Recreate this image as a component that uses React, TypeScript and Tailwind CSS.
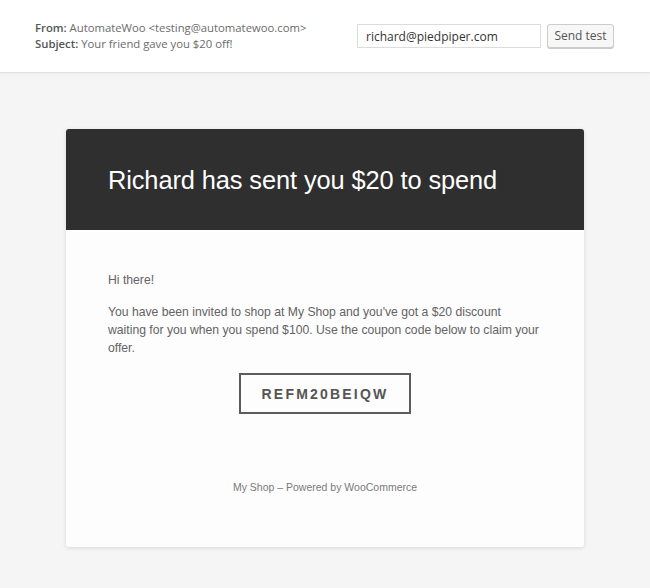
import React from 'react';

export default function App() {
    return (
        <div className="min-h-[588px] bg-[#f5f5f5]" style={{ fontFamily: '"Liberation Sans", Arial, sans-serif' }}>
            {/* Preview toolbar */}
            <div className="h-[73px] bg-white border-b border-[#e2e2e2] flex items-center justify-between pl-[35px] pr-[36px] shadow-[0_1px_2px_rgba(0,0,0,0.04)]" style={{ fontFamily: '"Open Sans", sans-serif' }}>
                <div className="text-[11.3px] leading-[16px] text-[#6b6b6b]">
                    <div><span className="font-semibold text-[#555]">From:</span> AutomateWoo &lt;testing@automatewoo.com&gt;</div>
                    <div><span className="font-semibold text-[#555]">Subject:</span> Your friend gave you $20 off!</div>
                </div>
                <div className="flex items-center gap-[6px]">
                    <input
                        type="text"
                        defaultValue="richard@piedpiper.com"
                        className="w-[184px] h-[24px] border border-[#dcdcdc] px-[8px] text-[12px] text-[#333] outline-none bg-white"
                    />
                    <button className="w-[67px] h-[24px] bg-[#f7f7f7] border border-[#cccccc] rounded-[3px] text-[12px] text-[#555] shadow-[0_1px_0_#cccccc]">
                        Send test
                    </button>
                </div>
            </div>

            {/* Email */}
            <div className="w-[518px] mx-auto mt-[56px] bg-[#fdfdfd] rounded-[3px] shadow-[0_1px_4px_rgba(0,0,0,0.12)] overflow-hidden">
                <div className="h-[101px] bg-[#2f2f2f] flex items-center pl-[42px] pt-[2px]">
                    <h1 className="text-[25.4px] text-white font-light tracking-[-0.1px]">Richard has sent you $20 to spend</h1>
                </div>
                <div className="px-[42px] pt-[41px] pb-[51px] text-[12.2px] leading-[18px] text-[#636363]">
                    <p>Hi there!</p>
                    <p className="mt-[14px]">
                        You have been invited to shop at My Shop and you've got a $20 discount waiting for you when you spend $100. Use the coupon code below to claim your offer.
                    </p>
                    <div className="flex justify-center mt-[16px]">
                        <div className="w-[172px] h-[41px] border-2 border-[#5c5c5c] flex items-center justify-center text-[14px] font-bold tracking-[2.2px] text-[#555]">
                            REFM20BEIQW
                        </div>
                    </div>
                    <p className="mt-[64px] text-center text-[10.5px] text-[#7a7a7a]">My Shop – Powered by WooCommerce</p>
                </div>
            </div>
        </div>
    );
}
